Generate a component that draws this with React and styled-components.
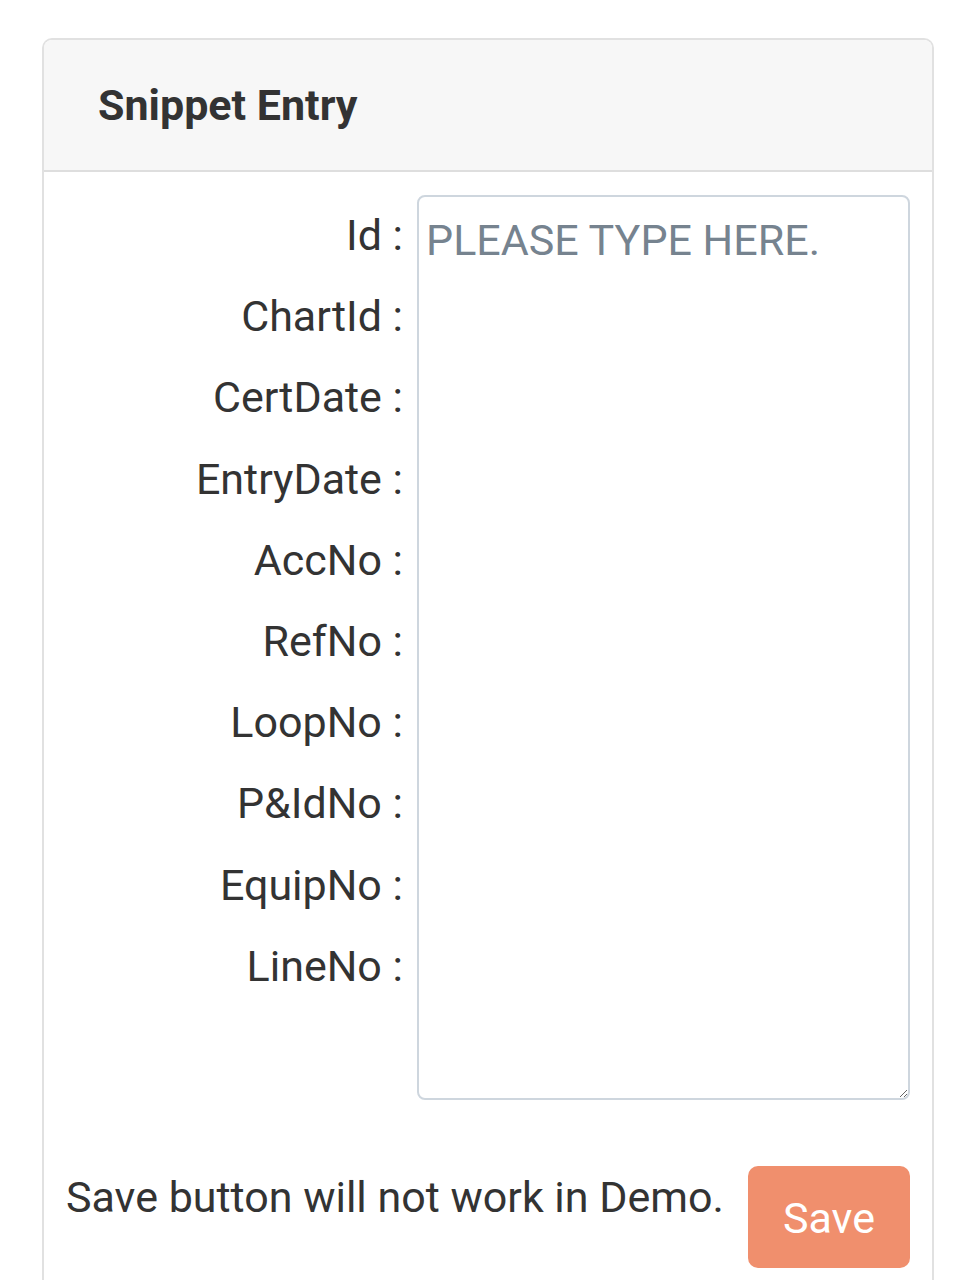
import React from 'react';
import styled, { createGlobalStyle } from 'styled-components';

const GlobalStyle = createGlobalStyle`
  html, body {
    margin: 0;
    padding: 0;
    background: #ffffff;
    font-family: Roboto, "Noto Sans", Arial, sans-serif;
    color: #333333;
  }
`

const Page = styled.div`
  padding: 38px 40px 0 42px;
`

const Card = styled.div`
  border: 2px solid #e1e1e1;
  border-bottom: none;
  border-radius: 10px 10px 0 0;
  min-height: 1260px;
  box-sizing: border-box;
`

const CardHeader = styled.div`
  height: 130px;
  display: flex;
  align-items: center;
  padding: 0 54px;
  background: #f7f7f7;
  border-bottom: 2px solid #dedede;
  border-radius: 8px 8px 0 0;
`

const Title = styled.h2`
  margin: 0;
  font-size: 43px;
  font-weight: 700;
  color: #333333;
`

const CardBody = styled.div`
  padding: 23px 22px 0 22px;
`

const FormRow = styled.div`
  display: flex;
  gap: 14px;
`

const Labels = styled.ul`
  list-style: none;
  margin: 0;
  padding: 0;
  flex: 1;
  display: flex;
  flex-direction: column;
`

const Label = styled.li`
  height: 81.2px;
  line-height: 81px;
  text-align: right;
  font-size: 43px;
  color: #333333;
`

const Entry = styled.textarea`
  width: 493px;
  height: 905px;
  box-sizing: border-box;
  border: 2px solid #ced6de;
  border-radius: 8px;
  padding: 18px 7px;
  font-family: Roboto, "Noto Sans", Arial, sans-serif;
  font-size: 43px;
  color: #333333;
  resize: vertical;
  outline: none;
  &::placeholder {
    color: #76838f;
    opacity: 1;
  }
`

const Footer = styled.div`
  display: flex;
  justify-content: space-between;
  align-items: flex-start;
  padding: 66px 0 0 0;
`

const Note = styled.p`
  margin: 0;
  padding-top: 6px;
  font-size: 43px;
  line-height: 50px;
  color: #333333;
`

const SaveButton = styled.button`
  width: 162px;
  height: 102px;
  border: none;
  border-radius: 10px;
  background: #f08f6d;
  color: #ffffff;
  font-family: Roboto, "Noto Sans", Arial, sans-serif;
  font-size: 43px;
  padding-top: 2px;
  cursor: pointer;
`

const fields = ['Id', 'ChartId', 'CertDate', 'EntryDate', 'AccNo', 'RefNo', 'LoopNo', 'P&IdNo', 'EquipNo', 'LineNo']

export default function App() {
  return (
    <>
      <GlobalStyle />
      <Page>
        <Card>
          <CardHeader>
            <Title>Snippet Entry</Title>
          </CardHeader>
          <CardBody>
            <FormRow>
              <Labels>
                {fields.map(f => (
                  <Label key={f}>{f} :</Label>
                ))}
              </Labels>
              <Entry placeholder='PLEASE TYPE HERE.' />
            </FormRow>
            <Footer>
              <Note>Save button will not work in Demo.</Note>
              <SaveButton>Save</SaveButton>
            </Footer>
          </CardBody>
        </Card>
      </Page>
    </>
  );
}
